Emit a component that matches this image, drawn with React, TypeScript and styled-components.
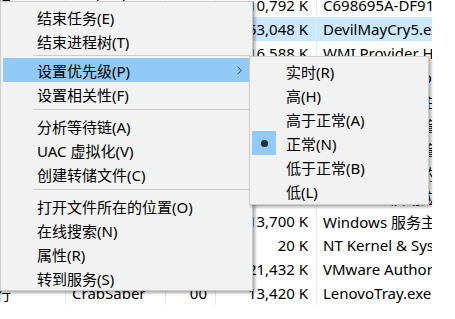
import React from "react";
import styled, { createGlobalStyle } from "styled-components";

const Global = createGlobalStyle`
  html, body { margin: 0; padding: 0; background: #ffffff; }
  body { overflow: hidden; }
`;

const Page = styled.div`
  position: relative;
  width: 455px;
  height: 319px;
  overflow: hidden;
  background: #ffffff;
  font-family: "Noto Sans", "Noto Sans CJK SC", sans-serif;
`;

const Table = styled.div`
  width: 432px;
  margin-top: -7px;
  display: flex;
  flex-direction: column;
`;

const Row = styled.div<{ $selected?: boolean }>`
  display: grid;
  grid-template-columns: 65px 100px 50px 101px 116px;
  height: 24px;
  background: ${(p) => (p.$selected ? "#cce8ff" : "transparent")};
  font-size: 15px;
  color: #000;
`;

const Cell = styled.div<{ $align?: "left" | "right"; $divider?: boolean }>`
  display: flex;
  align-items: center;
  justify-content: ${(p) => (p.$align === "right" ? "flex-end" : "flex-start")};
  padding: ${(p) => (p.$align === "right" ? "0 8px 0 0" : "0 0 0 6px")};
  white-space: nowrap;
  overflow: hidden;
  border-left: ${(p) => (p.$divider ? "1px solid #eaeaea" : "none")};
`;

const StatusText = styled.span`
  margin-left: -55px;
`;

const Menu = styled.div<{ $left: number; $top: number; $width: number }>`
  position: absolute;
  left: ${(p) => p.$left}px;
  top: ${(p) => p.$top}px;
  width: ${(p) => p.$width}px;
  box-sizing: border-box;
  background: #f2f2f2;
  border: 1px solid #cccccc;
  box-shadow: 2px 2px 3px rgba(0, 0, 0, 0.35);
  display: flex;
  flex-direction: column;
  font-family: "Noto Sans", "Noto Sans CJK SC", sans-serif;
  font-size: 15px;
  color: #000;
`;

const MainMenuBox = styled(Menu)`
  padding: 3px 2px 0 2px;
`;

const SubMenuBox = styled(Menu)`
  padding: 2px 2px 1px 2px;
`;

const Item = styled.div<{ $active?: boolean }>`
  height: 24px;
  display: flex;
  align-items: center;
  padding-left: 34px;
  padding-right: 8px;
  background: ${(p) => (p.$active ? "#91c9f7" : "transparent")};
  white-space: nowrap;
`;

const Chevron = styled.svg`
  margin-left: auto;
  width: 5px;
  height: 9px;
`;

const Separator = styled.div<{ $tight?: boolean }>`
  height: 1px;
  background: #cccccc;
  margin: ${(p) => (p.$tight ? "2px 0 2px 30px" : "3px 0 4px 30px")};
`;

const SubItem = styled.div`
  height: 24px;
  display: flex;
  align-items: center;
  white-space: nowrap;
`;

const CheckCol = styled.div<{ $checked?: boolean }>`
  width: 24px;
  height: 24px;
  display: flex;
  align-items: center;
  justify-content: center;
  background: ${(p) => (p.$checked ? "#91c9f7" : "transparent")};
  margin-right: 10px;
`;

const Dot = styled.div`
  width: 7px;
  height: 7px;
  border-radius: 50%;
  background: #2b2b2b;
`;

type RowData = {
  status: string;
  user: string;
  cpu: string;
  mem: string;
  desc: string;
  selected?: boolean;
};

const rows: RowData[] = [
  { status: "正在运行", user: "CrabSaber", cpu: "00", mem: "10,792 K", desc: "C698695A-DF91-4C5B" },
  { status: "正在运行", user: "CrabSaber", cpu: "00", mem: "53,048 K", desc: "DevilMayCry5.exe", selected: true },
  { status: "正在运行", user: "SYSTEM", cpu: "00", mem: "16,588 K", desc: "WMI Provider Host" },
  { status: "正在运行", user: "CrabSaber", cpu: "00", mem: "2,156 K", desc: "Host Process for Windows" },
  { status: "正在运行", user: "SYSTEM", cpu: "00", mem: "1,204 K", desc: "Windows 服务主机" },
  { status: "正在运行", user: "CrabSaber", cpu: "00", mem: "8,512 K", desc: "Windows 资源管理器" },
  { status: "正在运行", user: "SYSTEM", cpu: "00", mem: "3,092 K", desc: "Windows 会话管理器" },
  { status: "正在运行", user: "CrabSaber", cpu: "00", mem: "4,736 K", desc: "Windows 任务的主机" },
  { status: "正在运行", user: "SYSTEM", cpu: "00", mem: "1,880 K", desc: "Windows 启动应用程序" },
  { status: "正在运行", user: "SYSTEM", cpu: "00", mem: "13,700 K", desc: "Windows 服务主机进程" },
  { status: "正在运行", user: "SYSTEM", cpu: "00", mem: "20 K", desc: "NT Kernel & System" },
  { status: "正在运行", user: "SYSTEM", cpu: "00", mem: "21,432 K", desc: "VMware Authorization" },
  { status: "正在运行", user: "CrabSaber", cpu: "00", mem: "13,420 K", desc: "LenovoTray.exe" },
];

type MenuEntry = { label: string; submenu?: boolean; active?: boolean } | "sep" | "sep-tight";

const mainItems: MenuEntry[] = [
  { label: "结束任务(E)" },
  { label: "结束进程树(T)" },
  "sep-tight",
  { label: "设置优先级(P)", submenu: true, active: true },
  { label: "设置相关性(F)" },
  "sep",
  { label: "分析等待链(A)" },
  { label: "UAC 虚拟化(V)" },
  { label: "创建转储文件(C)" },
  "sep",
  { label: "打开文件所在的位置(O)" },
  { label: "在线搜索(N)" },
  { label: "属性(R)" },
  { label: "转到服务(S)" },
];

const priorities = [
  { label: "实时(R)" },
  { label: "高(H)" },
  { label: "高于正常(A)" },
  { label: "正常(N)", checked: true },
  { label: "低于正常(B)" },
  { label: "低(L)" },
];

export default function App() {
  return (
    <Page>
      <Global />
      <Table>
        {rows.map((r, i) => (
          <Row key={i} $selected={r.selected}>
            <Cell>
              <StatusText>{r.status}</StatusText>
            </Cell>
            <Cell $divider>{r.user}</Cell>
            <Cell $divider $align="right">
              {r.cpu}
            </Cell>
            <Cell $divider $align="right">
              {r.mem}
            </Cell>
            <Cell $divider>{r.desc}</Cell>
          </Row>
        ))}
      </Table>

      <MainMenuBox $left={0} $top={1} $width={253}>
        {mainItems.map((it, i) =>
          it === "sep" || it === "sep-tight" ? (
            <Separator key={i} $tight={it === "sep-tight"} />
          ) : (
            <Item key={i} $active={it.active}>
              {it.label}
              {it.submenu && (
                <Chevron viewBox="0 0 5 9">
                  <path d="M0.8 0.8 L4.2 4.5 L0.8 8.2" fill="none" stroke="#444" strokeWidth="1" />
                </Chevron>
              )}
            </Item>
          )
        )}
      </MainMenuBox>

      <SubMenuBox $left={249} $top={56} $width={180}>
        {priorities.map((p, i) => (
          <SubItem key={i}>
            <CheckCol $checked={p.checked}>{p.checked && <Dot />}</CheckCol>
            {p.label}
          </SubItem>
        ))}
      </SubMenuBox>
    </Page>
  );
}
